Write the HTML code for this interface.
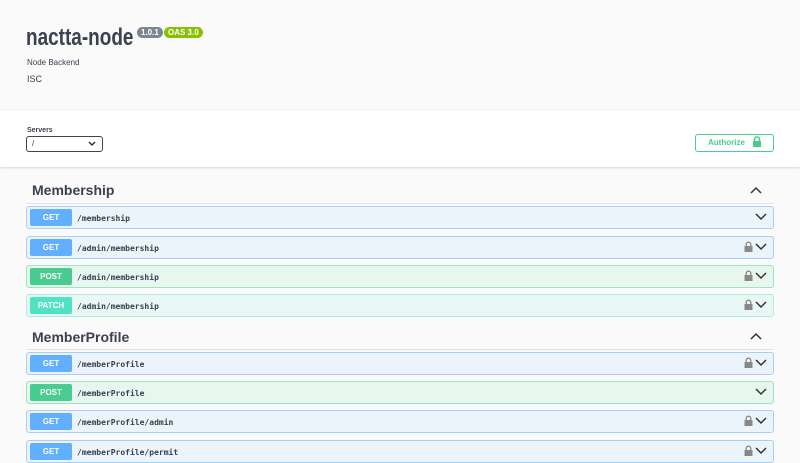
<!DOCTYPE html>
<html><head><meta charset="utf-8"><style>
*{margin:0;padding:0;box-sizing:border-box}
body{width:800px;height:452px;overflow:hidden;background:#fafafa;font-family:"Liberation Sans",sans-serif;position:relative;color:#3b4151}
.hdr{position:absolute;left:0;top:0;width:800px;height:111px;background:#fafafa}
.title{position:absolute;left:26px;top:24px;font-size:24px;font-weight:bold;color:#3b4151;transform:scaleX(0.79);transform-origin:left top;white-space:nowrap}
.badge{position:absolute;top:27px;height:11px;border-radius:6px;color:#fff;font-size:8px;font-weight:bold;line-height:11px;padding:0 4px}
.sc{position:absolute;left:0;top:111px;width:800px;height:56px;background:#fff;box-shadow:0 1px 2px rgba(0,0,0,.15)}
.row{position:absolute;left:26px;width:748px;height:23px;border:1px solid;border-radius:3px}
.get{background:#ebf3fb;border-color:#a9cef5}
.post{background:#e8f6f0;border-color:#9fe3c3}
.patch{background:#e9f8f5;border-color:#a6efe0}
.m{position:absolute;left:3px;top:2px;width:42px;height:17px;border-radius:2px;color:#fff;font-size:8px;font-weight:bold;text-align:center;line-height:17px}
.p{position:absolute;left:50px;top:1px;line-height:21px;font-family:"DejaVu Sans Mono","Liberation Mono",monospace;font-weight:bold;font-size:8px;color:#3b4151}
.ch{position:absolute;right:6px;top:6px}
.lk{position:absolute;right:20px;top:4px}
.tag{position:absolute;left:32px;font-size:14px;font-weight:bold;color:#3b4151}
.tl{position:absolute;left:26px;width:748px;height:1px;background:#e3e3e3}
</style></head><body>
<div class="hdr"></div>
<div class="title">nactta-node</div>
<div class="badge" style="left:137px;background:#7d8492">1.0.1</div>
<div class="badge" style="left:164px;background:#89bf04">OAS 3.0</div>
<div style="position:absolute;left:27px;top:58px;font-size:8px">Node Backend</div>
<div style="position:absolute;left:27px;top:74px;font-size:9px">ISC</div>
<div class="sc"></div>
<div style="position:absolute;left:27px;top:127px;font-size:7px;font-weight:bold">Servers</div>
<div style="position:absolute;left:26px;top:136px;width:77px;height:16px;border:1.5px solid #41444e;border-radius:3px;background:#fff;font-size:8px;padding-left:5px;line-height:13px">/<svg style="position:absolute;right:6px;top:4px" width="8" height="6"><path d="M1 1l3 3 3-3" stroke="#333" stroke-width="1.5" fill="none"/></svg></div>
<div style="position:absolute;left:695px;top:134px;width:79px;height:18px;border:1.5px solid #49cc90;border-radius:3px;color:#49cc90;font-size:8px;font-weight:bold;line-height:15px;padding-left:12px">Authorize<svg style="position:absolute;left:56px;top:1px" width="10" height="12"><path d="M2.5 5V3.5a2.5 2.5 0 015 0V5" stroke="#49cc90" stroke-width="1.5" fill="none"/><rect x="1" y="5" width="8" height="6" fill="#49cc90"/></svg></div>

<div class="tag" style="top:182px">Membership</div>
<svg style="position:absolute;left:750px;top:186px" width="12" height="8"><path d="M1 7l5-5 5 5" stroke="#333" stroke-width="1.5" fill="none"/></svg>
<div class="tl" style="top:203px"></div>
<div class="tag" style="top:329px">MemberProfile</div>
<svg style="position:absolute;left:750px;top:332px" width="12" height="8"><path d="M1 7l5-5 5 5" stroke="#333" stroke-width="1.5" fill="none"/></svg>
<div class="tl" style="top:349px"></div>

<div class="row get" style="top:206px"><div class="m" style="background:#61affe">GET</div><div class="p">/membership</div><svg class="ch" width="12" height="8"><path d="M1 1l5 5 5-5" stroke="#333" stroke-width="1.5" fill="none"/></svg></div>
<div class="row get" style="top:236px"><div class="m" style="background:#61affe">GET</div><div class="p">/admin/membership</div><svg class="lk" width="9" height="12"><path d="M2.2 5V3.5a2.3 2.3 0 014.6 0V5" stroke="#888" stroke-width="1.3" fill="none"/><rect x="0.5" y="5" width="8" height="6" fill="#888"/></svg><svg class="ch" width="12" height="8"><path d="M1 1l5 5 5-5" stroke="#333" stroke-width="1.5" fill="none"/></svg></div>
<div class="row post" style="top:265px"><div class="m" style="background:#49cc90">POST</div><div class="p">/admin/membership</div><svg class="lk" width="9" height="12"><path d="M2.2 5V3.5a2.3 2.3 0 014.6 0V5" stroke="#888" stroke-width="1.3" fill="none"/><rect x="0.5" y="5" width="8" height="6" fill="#888"/></svg><svg class="ch" width="12" height="8"><path d="M1 1l5 5 5-5" stroke="#333" stroke-width="1.5" fill="none"/></svg></div>
<div class="row patch" style="top:294px"><div class="m" style="background:#50e3c2">PATCH</div><div class="p">/admin/membership</div><svg class="lk" width="9" height="12"><path d="M2.2 5V3.5a2.3 2.3 0 014.6 0V5" stroke="#888" stroke-width="1.3" fill="none"/><rect x="0.5" y="5" width="8" height="6" fill="#888"/></svg><svg class="ch" width="12" height="8"><path d="M1 1l5 5 5-5" stroke="#333" stroke-width="1.5" fill="none"/></svg></div>

<div class="row get" style="top:352px"><div class="m" style="background:#61affe">GET</div><div class="p">/memberProfile</div><svg class="lk" width="9" height="12"><path d="M2.2 5V3.5a2.3 2.3 0 014.6 0V5" stroke="#888" stroke-width="1.3" fill="none"/><rect x="0.5" y="5" width="8" height="6" fill="#888"/></svg><svg class="ch" width="12" height="8"><path d="M1 1l5 5 5-5" stroke="#333" stroke-width="1.5" fill="none"/></svg></div>
<div class="row post" style="top:381px"><div class="m" style="background:#49cc90">POST</div><div class="p">/memberProfile</div><svg class="ch" width="12" height="8"><path d="M1 1l5 5 5-5" stroke="#333" stroke-width="1.5" fill="none"/></svg></div>
<div class="row get" style="top:410px"><div class="m" style="background:#61affe">GET</div><div class="p">/memberProfile/admin</div><svg class="lk" width="9" height="12"><path d="M2.2 5V3.5a2.3 2.3 0 014.6 0V5" stroke="#888" stroke-width="1.3" fill="none"/><rect x="0.5" y="5" width="8" height="6" fill="#888"/></svg><svg class="ch" width="12" height="8"><path d="M1 1l5 5 5-5" stroke="#333" stroke-width="1.5" fill="none"/></svg></div>
<div class="row get" style="top:440px"><div class="m" style="background:#61affe">GET</div><div class="p">/memberProfile/permit</div><svg class="lk" width="9" height="12"><path d="M2.2 5V3.5a2.3 2.3 0 014.6 0V5" stroke="#888" stroke-width="1.3" fill="none"/><rect x="0.5" y="5" width="8" height="6" fill="#888"/></svg><svg class="ch" width="12" height="8"><path d="M1 1l5 5 5-5" stroke="#333" stroke-width="1.5" fill="none"/></svg></div>
</body></html>
